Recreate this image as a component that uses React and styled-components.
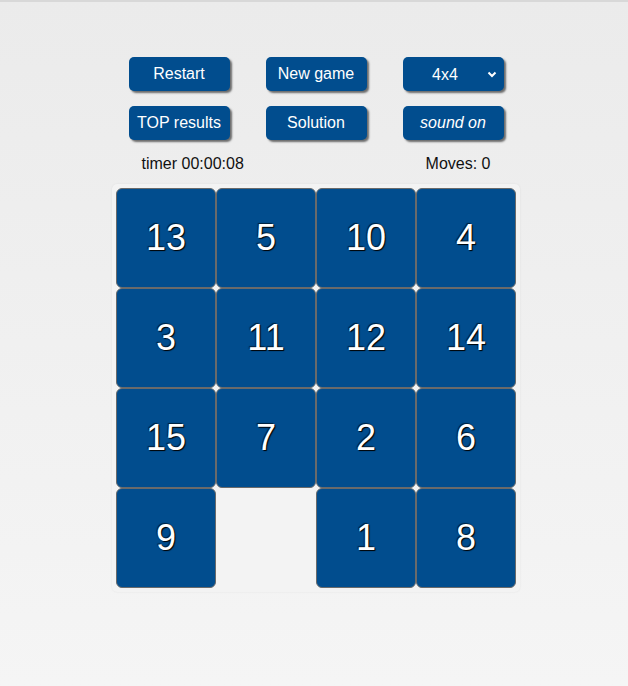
import styled, { createGlobalStyle } from "styled-components";

const tiles = [13, 5, 10, 4, 3, 11, 12, 14, 15, 7, 2, 6, 9, 0, 1, 8];

const GlobalStyle = createGlobalStyle`
  html, body {
    margin: 0;
    padding: 0;
  }
  body {
    min-height: 100vh;
    font-family: "Liberation Sans", Arial, sans-serif;
    background: linear-gradient(180deg, #ebebeb 0%, #f5f5f5 100%);
    border-top: 2px solid #d8d8d8;
    box-sizing: border-box;
  }
`;

export default function App() {
  return (
    <>
      <GlobalStyle />
      <Page>
        <Controls>
          <Button>Restart</Button>
          <Button>New game</Button>
          <SelectWrap>
            <Select defaultValue="4x4">
              <option>3x3</option>
              <option>4x4</option>
              <option>5x5</option>
              <option>6x6</option>
              <option>7x7</option>
              <option>8x8</option>
            </Select>
            <Chevron width="10" height="7" viewBox="0 0 10 7">
              <path d="M1.5 1.5 L5 5 L8.5 1.5" fill="none" stroke="#fff" strokeWidth="2" />
            </Chevron>
          </SelectWrap>
          <Button>TOP results</Button>
          <Button>Solution</Button>
          <Button italic>sound on</Button>
        </Controls>
        <Info>
          <span>timer 00:00:08</span>
          <span>Moves: 0</span>
        </Info>
        <Board>
          {tiles.map((n, i) =>
            n ? <Tile key={i}>{n}</Tile> : <Empty key={i} />
          )}
        </Board>
      </Page>
    </>
  );
}

const Page = styled.div`
  display: flex;
  flex-direction: column;
  align-items: center;
  padding: 55px 0 0 4px;
`;

const Controls = styled.div`
  display: grid;
  grid-template-columns: repeat(3, 101px);
  column-gap: 36px;
  row-gap: 15px;
`;

const Button = styled.button`
  height: 34px;
  border: none;
  border-radius: 5px;
  background: #014d8e;
  color: #fff;
  font-family: "Liberation Sans", Arial, sans-serif;
  font-size: 16px;
  font-style: ${({ italic }) => (italic ? "italic" : "normal")};
  box-shadow: 2px 2px 2px rgba(0, 0, 0, 0.55);
  padding: 0;
  cursor: pointer;
`;

const SelectWrap = styled.div`
  position: relative;
  height: 34px;
`;

const Select = styled.select`
  width: 100%;
  height: 34px;
  appearance: none;
  border: none;
  border-radius: 5px;
  background: #014d8e;
  color: #fff;
  font-family: "Liberation Sans", Arial, sans-serif;
  font-size: 16px;
  text-align: center;
  text-align-last: center;
  padding: 0 16px 0 0;
  box-shadow: 2px 2px 2px rgba(0, 0, 0, 0.55);
  outline: none;
`;

const Chevron = styled.svg`
  position: absolute;
  right: 7px;
  top: 14px;
  pointer-events: none;
`;

const Info = styled.div`
  width: 349px;
  display: flex;
  justify-content: space-between;
  margin-top: 15px;
  font-size: 16px;
  color: #111;
  line-height: 18px;
`;

const Board = styled.div`
  margin-top: 11px;
  display: grid;
  grid-template-columns: repeat(4, 100px);
  grid-auto-rows: 100px;
  padding: 4px;
  background: #f3f3f3;
  border-radius: 5px;
  box-shadow: 0 0 2px rgba(0, 0, 0, 0.08);
`;

const Tile = styled.div`
  box-sizing: border-box;
  display: flex;
  align-items: center;
  justify-content: center;
  background: #014d8e;
  border: 1px solid #6a6a6a;
  border-radius: 6px;
  color: #fff;
  font-size: 36px;
  text-shadow: 1px 1px 1px #000, -1px -1px 1px rgba(0, 0, 0, 0.6);
`;

const Empty = styled.div``;
